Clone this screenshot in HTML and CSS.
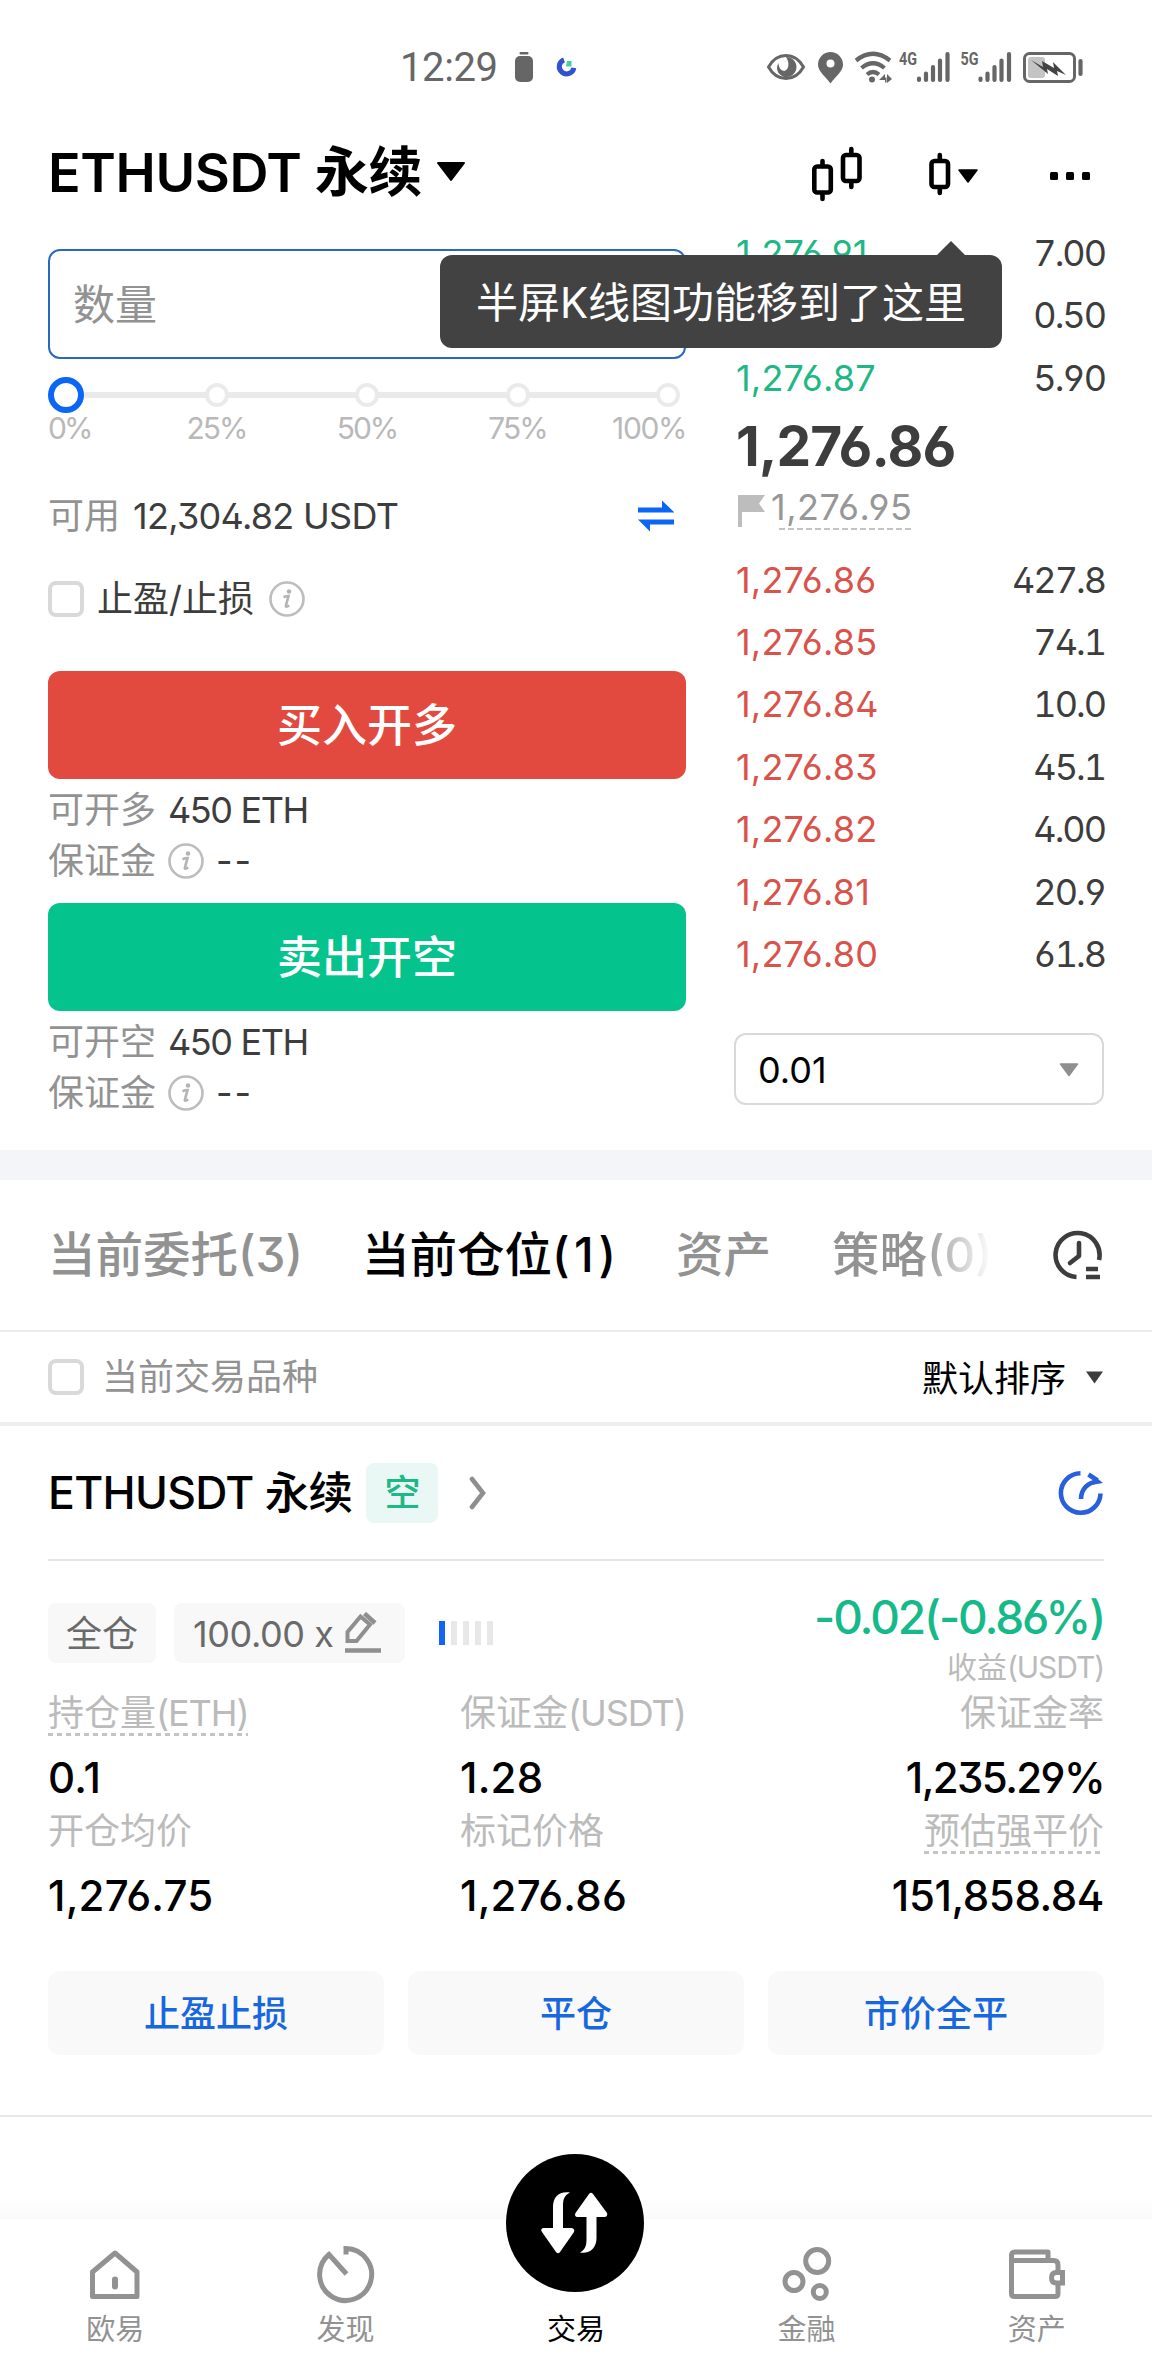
FILE: index.html
```html
<!DOCTYPE html>
<html lang="zh-CN">
<head>
<meta charset="utf-8">
<title>ETHUSDT 永续</title>
<link rel="stylesheet" href="styles.css">
</head>
<body>
<svg class="defs" width="0" height="0">
  <symbol id="info" viewBox="0 0 36 36">
    <circle cx="18" cy="18" r="16.5" fill="none" stroke="#bdbdbd" stroke-width="2.6"/>
    <circle cx="20" cy="10.5" r="2.3" fill="#b4b4b4"/>
    <path d="M14.5 16.2c2-.8 3.600-1.200 5-1.200l-2.600 9.600c-.3 1.300.6 1.500 3.400.1" fill="none" stroke="#b4b4b4" stroke-width="2.600"/>
  </symbol>
</svg>

<div class="status">
  <span class="time">12:29</span>
  <svg class="status-left" width="62" height="32" viewBox="515 51 62 32">
    <rect x="519.500" y="52" width="9" height="2.500" rx="1" fill="#666"/>
    <rect x="515" y="56" width="18" height="26" rx="5" fill="#666"/>
    <path d="M564 59.800a7.300 7.300 0 1 0 9.800 8" fill="none" stroke="#3152cf" stroke-width="5"/>
    <path d="M567 61h4.500v5.500h-5.500z" fill="#45cf9e"/>
  </svg>
  <svg class="status-right" width="318" height="34" viewBox="766 51 318 34">
    <g fill="none" stroke="#666" stroke-width="3">
      <path d="M768.500 67C773 59 779 55.500 786 55.500S799 59 803.500 67C799 75 793 78.500 786 78.500S773 75 768.500 67z"/>
      <path d="M856 60.500Q873 47 890 60.500" stroke-width="4.200"/>
      <path d="M861.500 68Q873 58.500 884.500 68" stroke-width="4.200"/>
      <path d="M867 74.500Q873 69.500 879 74.500" stroke-width="4.200"/>
      <rect x="1024.500" y="53.500" width="50" height="28" rx="5"/>
    </g>
    <path d="M786 57a10 10 0 1 1-7.500 16c-2-3-2-7 0-10 0 5 3 8 6 8 5-2 5-9 1.500-14z" fill="#666"/>
    <path d="M830.500 52a12.500 12.500 0 0 1 12.500 12.500C843 71 836 76 830.500 83.500 825 76 818 71 818 64.500A12.500 12.500 0 0 1 830.500 52z" fill="#666"/>
    <circle cx="830.500" cy="63.500" r="4" fill="#fff"/>
    <circle cx="872" cy="79.500" r="3" fill="#666"/>
    <path d="M879 80l6-6v3.500h1.500v5h-1.500v-2.500zM887 74l5 5-5 4z" fill="#666"/>
    <g class="net"><text x="899" y="65" textLength="18" lengthAdjust="spacingAndGlyphs">4G</text><text x="960.500" y="65" textLength="18" lengthAdjust="spacingAndGlyphs">5G</text></g>
    <g stroke="#666" stroke-width="4.200" stroke-linecap="round">
      <path d="M919 78.500v1.500M926 73.500v6.500M933 67v13M940 60.500v19.500M947.500 54v26"/>
      <path d="M980.500 78.500v1.500M987.500 73.500v6.500M994.500 67v13M1001.500 60.500v19.500M1009 54v26"/>
      <path d="M1080.500 61v13"/>
    </g>
    <rect x="1028" y="57" width="17" height="21" rx="3" fill="#c4c4c4"/>
    <path d="M1031 60l12 7-1-6 12 7-1-6 13 13-9-4 1 5-11-7 1 5z" fill="#444"/>
  </svg>
</div>

<header class="titlebar">
  <h1 class="pair">ETHUSDT 永续</h1>
  <svg class="pair-arrow" width="30" height="20" viewBox="0 0 30 20"><path d="M2 1h26L15 18z" stroke="#000" stroke-width="2" stroke-linejoin="round"/></svg>
  <svg class="head-icons" width="282" height="58" viewBox="810 145 282 58">
    <g fill="none" stroke="#000" stroke-width="4.600">
      <rect x="814.300" y="166.500" width="16.500" height="26" rx="3"/><path d="M822.500 161v5M822.500 193v6" stroke-linecap="round"/>
      <rect x="843" y="155" width="16.500" height="26" rx="3"/><path d="M851.300 149v5M851.300 182v5" stroke-linecap="round"/>
      <rect x="931.500" y="161" width="16.500" height="26" rx="3"/><path d="M939.800 155v5M939.800 188v5" stroke-linecap="round"/>
    </g>
    <path d="M959 170h18l-9 12z" stroke="#000" stroke-width="1.500" stroke-linejoin="round"/>
    <rect x="1050" y="172" width="8" height="8" rx="1.500"/><rect x="1066" y="172" width="8" height="8" rx="1.500"/><rect x="1082" y="172" width="8" height="8" rx="1.500"/>
  </svg>
  <div class="tooltip">半屏K线图功能移到了这里</div>
</header>

<main>
<section class="trade">
  <div class="order">
    <div class="amount">数量</div>
    <div class="slider">
      <i class="knob"></i><i class="stop"></i><i class="stop"></i><i class="stop"></i><i class="stop"></i>
    </div>
    <div class="ticks"><span>0%</span><span>25%</span><span>50%</span><span>75%</span><span>100%</span></div>
    <div class="line avail">
      <span class="muted">可用</span><span class="num">12,304.82 USDT</span>
      <svg class="swap" width="38" height="32" viewBox="0 0 38 32" fill="#0b66f6"><path d="M1 7.500h24V.5l12.500 12H1zM37 24.500H13v7L1 19.500h36z"/></svg>
    </div>
    <div class="line tpsl"><i class="check"></i><span>止盈/止损</span><svg width="36" height="36"><use href="#info"/></svg></div>
    <button class="btn buy">买入开多</button>
    <div class="line cap"><span class="muted">可开多</span><span class="eth">450 ETH</span></div>
    <div class="line margin"><span class="muted">保证金</span><svg width="36" height="36"><use href="#info"/></svg><span class="dash">--</span></div>
    <button class="btn sell">卖出开空</button>
    <div class="line cap"><span class="muted">可开空</span><span class="eth">450 ETH</span></div>
    <div class="line margin"><span class="muted">保证金</span><svg width="36" height="36"><use href="#info"/></svg><span class="dash">--</span></div>
  </div>

  <div class="book">
    <div class="level up"><b>1,276.91</b><span>7.00</span></div>
    <div class="level up"><b></b><span>0.50</span></div>
    <div class="level up"><b>1,276.87</b><span>5.90</span></div>
    <div class="last">1,276.86</div>
    <div class="mark"><svg width="28" height="32" viewBox="0 0 28 32"><path d="M0 0h27l-6 8.500L27 17H4v15H0z" fill="#bdbdbd"/></svg><span>1,276.95</span></div>
    <div class="level down"><b>1,276.86</b><span>427.8</span></div>
    <div class="level down"><b>1,276.85</b><span>74.1</span></div>
    <div class="level down"><b>1,276.84</b><span>10.0</span></div>
    <div class="level down"><b>1,276.83</b><span>45.1</span></div>
    <div class="level down"><b>1,276.82</b><span>4.00</span></div>
    <div class="level down"><b>1,276.81</b><span>20.9</span></div>
    <div class="level down"><b>1,276.80</b><span>61.8</span></div>
    <div class="select"><span>0.01</span><svg width="20" height="14" viewBox="0 0 20 14"><path d="M1.500 1h17L10 12.500z" fill="#8f8f8f" stroke="#8f8f8f" stroke-width="1.500" stroke-linejoin="round"/></svg></div>
  </div>
</section>

<nav class="tabs">
  <span>当前委托(3)</span><span class="active">当前仓位<em>(1)</em></span><span>资产</span><span class="fade">策略(0)</span>
  <svg class="history" width="50" height="50" viewBox="1052 1231 50 50" fill="none" stroke="#3d3d3d" stroke-width="4.600">
    <path d="M1076.500 1278A22 22 0 1 1 1099 1261"/><path d="M1079 1244v13l-9 7" stroke-linecap="round" stroke-linejoin="round"/><path d="M1086 1270h12M1086 1278h14"/>
  </svg>
</nav>
<div class="filter">
  <i class="check"></i><span class="muted">当前交易品种</span>
  <span class="sort">默认排序</span><svg width="17" height="13" viewBox="0 0 17 13"><path d="M0 .5h17l-8.500 12z" fill="#3d3d3d"/></svg>
</div>

<section class="position">
  <div class="pos-head">
    <h2>ETHUSDT 永续</h2><span class="side">空</span>
    <svg class="chev" width="18" height="34" viewBox="0 0 18 34"><path d="M3 3l11 14L3 31" fill="none" stroke="#8f8f8f" stroke-width="4.600" stroke-linecap="round"/></svg>
    <svg class="share" width="46" height="46" viewBox="1057 1470 46 46" fill="none" stroke="#2a5fdb" stroke-width="4.600">
      <path d="M1079.500 1473.200A19.800 19.800 0 1 0 1099.500 1493.500"/><path d="M1080 1499C1080 1489 1087 1482.500 1096 1481.500"/><path d="M1087.500 1474.500l9 6"/><path d="M1092 1475l10 8-12 2 5-4z" fill="#2a5fdb" stroke="none"/>
    </svg>
  </div>
  <div class="summary">
    <span class="tag">全仓</span>
    <span class="tag lev"><span>100.00 x</span><svg width="37" height="42" viewBox="345 1612 37 42" fill="none" stroke="#8f8f8f" stroke-width="4"><path d="M347.500 1641v-9l13-15.500 9.500 8-13.500 16.500z"/><path d="M364.500 1613.500l10.500 9.500" stroke-width="4.500"/><path d="M345 1650.500h36" stroke-width="4.600"/></svg></span>
    <span class="risk"><i class="on"></i><i></i><i></i><i></i><i></i></span>
    <div class="pnl"><strong>-0.02(-0.86%)</strong><span>收益<em>(USDT)</em></span></div>
  </div>
  <div class="stats">
    <div class="k"><u>持仓量<em>(ETH)</em></u></div><div class="k">保证金<em>(USDT)</em></div><div class="k">保证金率</div>
    <div class="v">0.1</div><div class="v">1.28</div><div class="v ratio">1,235.29%</div>
    <div class="k">开仓均价</div><div class="k">标记价格</div><div class="k"><u>预估强平价</u></div>
    <div class="v">1,276.75</div><div class="v">1,276.86</div><div class="v liq">151,858.84</div>
  </div>
  <div class="actions"><button>止盈止损</button><button>平仓</button><button>市价全平</button></div>
</section>
</main>

<footer class="dock">
  <a><svg width="58" height="58" viewBox="86 2246 58 58" fill="none" stroke="#929292" stroke-width="5"><path d="M92.500 2296.500v-24.500l22.500-19 22 19v24.500z" stroke-linejoin="round"/><path d="M115 2279.500v7" stroke-width="6" stroke-linecap="round"/></svg><span>欧易</span></a>
  <a><svg width="58" height="58" viewBox="317 2246 58 58" fill="none" stroke="#929292" stroke-width="5"><path d="M346 2254.500v-6a26 26 0 1 1-17 6l17.500 19.500" stroke-linejoin="miter"/></svg><span>发现</span></a>
  <a class="current"><svg class="orb" width="138" height="138" viewBox="506 2154 138 138"><circle cx="575" cy="2223" r="69"/><path d="M570 2192.500C564 2196 563 2199 563 2207V2228H572Q575 2229 574 2232L560 2252Q558 2254.500 556 2252L542 2232Q540 2229 543 2228H553V2207C553 2197 559 2191 570 2192.500zM580 2252.500C586 2249 586.500 2245 586.500 2238V2217H577Q574 2216 575.500 2213L589 2194Q591 2191.500 593 2194L607 2213Q608 2216 605 2217H596.500V2238C596.500 2248 590 2254 580 2252.500z" fill="#fff"/></svg><span>交易</span></a>
  <a><svg width="58" height="58" viewBox="777 2246 58 58" fill="none" stroke="#929292" stroke-width="5"><circle cx="817.200" cy="2261" r="11.500"/><circle cx="794" cy="2281.500" r="9"/><circle cx="819.800" cy="2292" r="6.500"/></svg><span>金融</span></a>
  <a><svg width="58" height="58" viewBox="1008 2246 58 58" fill="none" stroke="#929292" stroke-width="5"><path d="M1058 2271v-6q0-4.500-4.500-4.500h-42v33q0 3 3 3h40.500q3 0 3-3v-9.500M1011.500 2261v-5.500q0-3.500 3.500-3.500h33v8" stroke-linejoin="round"/><path d="M1062.500 2272.500h-6q-5 0-5 5.200t5 5.300h6z"/></svg><span>资产</span></a>
</footer>
</body>
</html>
```

FILE: styles.css
```css
* { box-sizing: border-box; margin: 0; padding: 0; }

body {
  width: 1152px;
  height: 2376px;
  background: #fff;
  color: #3d3d3d;
  font-family: Inter, "Noto Sans CJK SC", sans-serif;
  font-size: 36px;
  font-feature-settings: "ss01";
  overflow: hidden;
}

button { border: 0; font-family: inherit; }
em { font-style: normal; letter-spacing: -1.1px; }
.defs { position: absolute; }
svg { flex: none; display: block; }
i { flex: none; }
.muted { color: #929292; }

/* status bar */
.status { display: flex; height: 104px; padding: 51px 68px 0 400px; }
.time { width: 115px; font: 400 40px/34px Roboto, sans-serif; letter-spacing: -0.4px; color: #666; }
.status-right { margin-left: auto; overflow: visible; }
.net { font: 700 18px Roboto, sans-serif; fill: #666; }

/* title bar */
.titlebar { position: relative; display: flex; height: 136px; padding: 0 60px 0 48px; }
.pair { font-size: 54px; font-weight: 600; line-height: 137px; letter-spacing: -0.4px; color: #000; white-space: nowrap; }
.pair-arrow { position: relative; margin: 58px 0 0 14px; }
.head-icons { margin: 41px 0 0 auto; }
.tooltip {
  position: absolute;
  z-index: 2;
  left: 440px;
  top: 151px;
  width: 562px;
  height: 93px;
  border-radius: 12px;
  background: #424242;
  color: #fff;
  font-size: 42px;
  line-height: 95px;
  text-align: center;
  white-space: nowrap;
}
.tooltip::before {
  content: "";
  position: absolute;
  left: 496px;
  top: -14px;
  border: 15px solid transparent;
  border-top: 0;
  border-bottom: 15px solid #424242;
}

/* trade panel */
.trade {
  display: grid;
  grid-template-columns: 638px 370px;
  column-gap: 48px;
  height: 940px;
  padding: 0 48px;
  border-bottom: 30px solid #f4f5f9;
  overflow: hidden;
}
.amount {
  height: 110px;
  margin-top: 9px;
  padding-left: 23px;
  border: 2px solid #2668c4;
  border-radius: 12px;
  color: #929292;
  font-size: 42px;
  line-height: 107px;
}
.slider {
  display: flex;
  align-items: center;
  justify-content: space-between;
  height: 36px;
  margin-top: 18px;
  padding-right: 6px;
  background: linear-gradient(#eaeaea, #eaeaea) 20px 15px / 590px 6px no-repeat;
}
.knob { width: 36px; height: 36px; border: 6px solid #0b66f6; border-radius: 50%; background: #fff; margin-right: -6px; }
.stop { width: 24px; height: 24px; border: 4px solid #eaeaea; border-radius: 50%; background: #fff; }
.ticks { display: grid; grid-template-columns: 93px 151px 150px 151px 93px; font-size: 30px; line-height: 31px; height: 30px; color: #b9b9b9; text-align: center; letter-spacing: -2px; }
.ticks span:first-child { text-align: left; letter-spacing: -3px; }
.ticks span:last-child { text-align: right; letter-spacing: -1.4px; }

.line { display: flex; align-items: center; line-height: 44px; white-space: nowrap; }
.avail { height: 44px; margin-top: 51px; }
.num { margin-left: 13px; letter-spacing: -0.7px; }
.swap { margin: 0 11px 0 auto; }
.tpsl { height: 44px; margin-top: 39px; }
.tpsl span { margin: 0 15px 0 13px; }
.check { width: 36px; height: 36px; border: 4px solid #d9d9d9; border-radius: 8px; }
.btn { display: block; width: 638px; height: 108px; border-radius: 12px; color: #fff; font-size: 45px; font-weight: 500; line-height: 109px; }
.buy { margin-top: 50px; background: #e24a40; }
.sell { margin-top: 16px; background: #05c38c; }
.cap { height: 51px; margin-top: 5px; }
.eth { margin-left: 12px; letter-spacing: -1.4px; }
.margin { height: 52px; }
.margin svg { margin: 0 12px; }
.dash { letter-spacing: 2px; }

/* order book */
.book { margin-top: -18px; padding-left: 2px; }
.level { display: flex; justify-content: space-between; height: 62.4px; line-height: 62.4px; }
.level b { font-weight: 400; letter-spacing: 0.2px; }
.level span { font-variant-numeric: tabular-nums; letter-spacing: -2px; margin-right: -1px; }
.up b { color: #1db885; }
.down b { color: #d9534b; }
.last { height: 74px; font-size: 55px; font-weight: 700; line-height: 74px; letter-spacing: -0.8px; }
.mark { display: flex; height: 47px; padding-left: 2px; line-height: 48px; color: #979797; letter-spacing: 0.5px; }
.mark svg { margin: 12px 5px 0 0; }
.mark span { background: repeating-linear-gradient(90deg, #c4c4c4 0 6px, transparent 6px 9px) 8px 45px / 132px 2px no-repeat; }
.mark + .level { margin-top: 18.500px; }
.select {
  display: flex;
  align-items: center;
  justify-content: space-between;
  height: 72px;
  margin: 47.5px 0 0 -2px;
  padding: 2px 23px 0 22px;
  border: 2px solid #d9d9d9;
  border-radius: 12px;
  color: #000;
}

/* tabs and filter */
.tabs { display: flex; align-items: center; height: 152px; padding: 0 50px 0 48px; border-bottom: 2px solid #ebebeb; font-size: 47.500px; font-weight: 500; line-height: 60px; color: #929292; white-space: nowrap; }
.tabs span { width: 314px; }
.tabs span:nth-child(3) { width: 156px; }
.tabs .active { color: #000; }
.tabs em { letter-spacing: 4.5px; }
.tabs .fade { width: 160px; color: transparent; background: linear-gradient(90deg, #929292 55%, #fff 100%); background-clip: text; -webkit-background-clip: text; }
.history { margin-left: auto; }
.filter { display: flex; align-items: center; height: 94px; padding: 0 49px 0 48px; border-bottom: 4px solid #eeeef2; line-height: 44px; }
.filter .muted { margin-left: 18px; }
.sort { margin: 3px 20px 0 auto; color: #000; }

/* position card */
.position { height: 691px; padding: 0 48px; border-bottom: 2px solid #e8e8e8; }
.pos-head { display: flex; align-items: center; height: 135px; border-bottom: 2px solid #e6e6e6; }
.pos-head h2 { font-size: 44.500px; font-weight: 500; line-height: 60px; letter-spacing: -0.7px; color: #000; white-space: nowrap; }
.side { width: 72px; height: 60px; margin-left: 14px; border-radius: 8px; background: #e9f8f5; color: #1db885; font-weight: 500; line-height: 60px; text-align: center; }
.chev { margin-left: 31px; }
.share { margin-left: auto; }
.summary { display: flex; align-items: flex-start; height: 128px; padding-top: 42px; color: #6a6a6a; }
.tag { height: 60px; padding: 0 18px; border-radius: 8px; background: #f8f8f8; line-height: 62px; }
.lev { display: flex; width: 231px; margin-left: 18px; white-space: nowrap; justify-content: space-between; padding: 0 23px 0 19px; letter-spacing: -0.4px; }
.lev svg { margin-top: 9px; }
.risk { display: flex; gap: 6px; margin: 18px 0 0 34px; }
.risk i { width: 6px; height: 24px; background: #e8e8e8; }
.risk .on { background: #1464f0; }
.pnl { display: flex; flex-direction: column; margin: -17px 0 0 auto; text-align: right; }
.pnl strong { font-size: 46px; font-weight: 500; line-height: 62px; letter-spacing: -2.1px; color: #16b98a; }
.pnl span { font-size: 30px; line-height: 38px; color: #bbb; }
.stats { display: grid; grid-template-columns: 412px 1fr auto; color: #000; }
.stats > :nth-child(3n) { text-align: right; }
.k { height: 48px; line-height: 48px; color: #bbb; }
.k u { display: inline-block; height: 48px; text-decoration: none; background: repeating-linear-gradient(90deg, #c4c4c4 0 5px, transparent 5px 9px) 0 44px / 100% 3px no-repeat; }
.v { height: 70px; padding-top: 12px; font-size: 42px; font-weight: 500; line-height: 58px; letter-spacing: 0.2px; }
.ratio { letter-spacing: -1.6px; }
.liq { letter-spacing: -0.4px; }
.actions { display: grid; grid-template-columns: repeat(3, 1fr); gap: 24px; margin-top: 46px; }
.actions button { height: 84px; border-radius: 12px; background: #f9f9f9; color: #1767de; font-size: 36px; font-weight: 500; line-height: 86px; }

/* bottom navigation */
.dock { display: grid; grid-template-columns: repeat(5, 1fr); height: 259px; padding-top: 129px; background: linear-gradient(#fff 80px, #fafafa 102px, #fff 102px); }
.dock a { display: flex; flex-direction: column; align-items: center; color: #929292; font-size: 29px; line-height: 52px; }
.dock .current { color: #000; }
.orb { margin: -92px 2px 12px 0; }
```
